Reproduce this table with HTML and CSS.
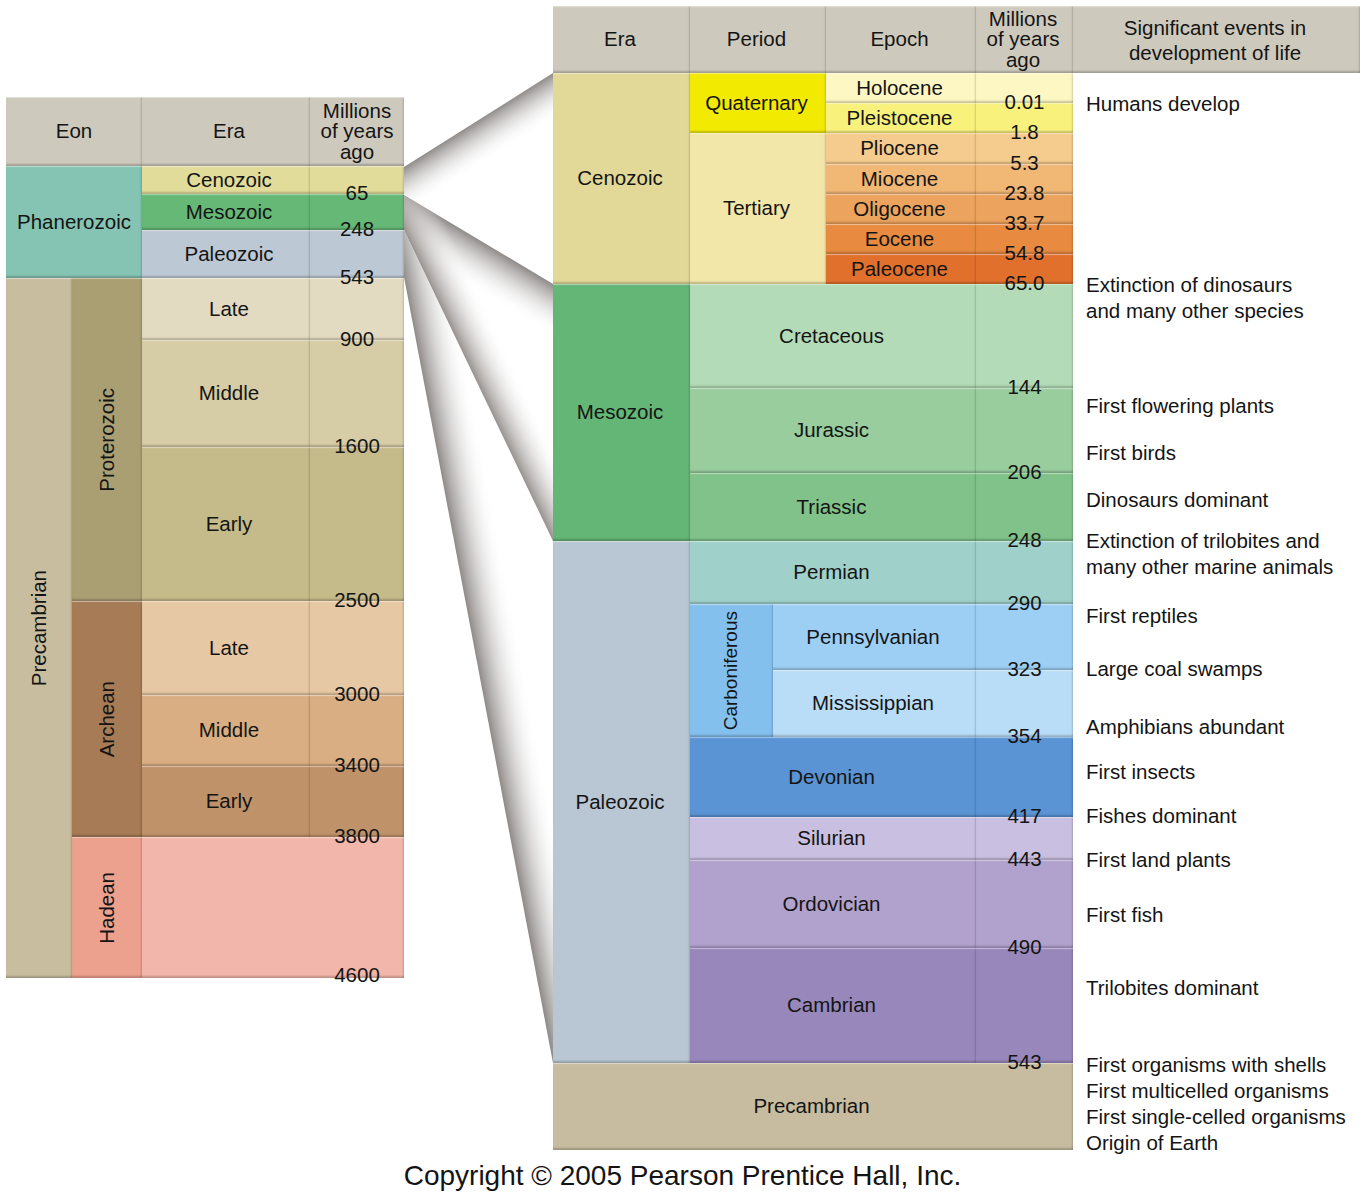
FILE: index.html
```html
<!DOCTYPE html>
<html>
<head>
<meta charset="utf-8">
<title>Geologic time scale</title>
<link rel="stylesheet" href="styles.css">
</head>
<body>
<div class="page">
  <div class="main">
    <div class="ltable">
      <div class="cell hdr span2">Eon</div>
      <div class="cell hdr ecol">Era</div>
      <div class="cell hdr small">Millions<br>of years<br>ago</div>

      <div class="cell phan span2 rows3">Phanerozoic</div>
      <div class="cell ecol l-ceno">Cenozoic</div>
      <div class="cell num l-ceno"><span class="lbl">65</span></div>
      <div class="cell ecol l-meso">Mesozoic</div>
      <div class="cell num l-meso"><span class="lbl">248</span></div>
      <div class="cell ecol l-paleo">Paleozoic</div>
      <div class="cell num l-paleo"><span class="lbl">543</span></div>

      <div class="cell precam rows7"><span class="vert">Precambrian</span></div>
      <div class="cell proter rows3"><span class="vert">Proterozoic</span></div>
      <div class="cell ecol p-late">Late</div>
      <div class="cell num p-late"><span class="lbl">900</span></div>
      <div class="cell ecol p-mid">Middle</div>
      <div class="cell num p-mid"><span class="lbl">1600</span></div>
      <div class="cell ecol p-early">Early</div>
      <div class="cell num p-early"><span class="lbl">2500</span></div>

      <div class="cell arch rows3"><span class="vert">Archean</span></div>
      <div class="cell ecol a-late">Late</div>
      <div class="cell num a-late"><span class="lbl">3000</span></div>
      <div class="cell ecol a-mid">Middle</div>
      <div class="cell num a-mid"><span class="lbl">3400</span></div>
      <div class="cell ecol a-early">Early</div>
      <div class="cell num a-early"><span class="lbl">3800</span></div>

      <div class="cell hadean"><span class="vert">Hadean</span></div>
      <div class="cell num hadfill span2"><span class="lbl lbl-right">4600</span></div>
    </div>

    <svg class="connect" width="149" height="1150" viewBox="404 6 149 1150">
      <defs>
        <linearGradient id="g1" gradientUnits="userSpaceOnUse" x1="404" y1="167" x2="425.4" y2="200.8">
          <stop offset="0" stop-color="#8f8b89"/>
          <stop offset="1" stop-color="#ffffff" stop-opacity="0"/>
        </linearGradient>
        <linearGradient id="g2" gradientUnits="userSpaceOnUse" x1="404" y1="195" x2="380.9" y2="233.6">
          <stop offset="0" stop-color="#8f8b89"/>
          <stop offset="1" stop-color="#ffffff" stop-opacity="0"/>
        </linearGradient>
        <linearGradient id="g3" gradientUnits="userSpaceOnUse" x1="404" y1="230" x2="440.1" y2="212.7">
          <stop offset="0" stop-color="#97928f"/>
          <stop offset="1" stop-color="#ffffff" stop-opacity="0"/>
        </linearGradient>
        <linearGradient id="g4" gradientUnits="userSpaceOnUse" x1="404" y1="277" x2="448.2" y2="268.6">
          <stop offset="0" stop-color="#8f8b89"/>
          <stop offset="1" stop-color="#ffffff" stop-opacity="0"/>
        </linearGradient>
      </defs>
      <polygon points="404,167 553,73 553,284 404,194" fill="url(#g1)"/>
      <polygon points="404,195 553,284 553,541 404,230" fill="url(#g2)"/>
      <polygon points="404,195 553,284 553,541 404,230" fill="url(#g3)"/>
      <polygon points="404,230 553,541 553,1063 404,277" fill="url(#g4)"/>
    </svg>

    <div class="rtable">
      <div class="cell hdr">Era</div>
      <div class="cell hdr span2">Period</div>
      <div class="cell hdr">Epoch</div>
      <div class="cell hdr small">Millions<br>of years<br>ago</div>
      <div class="cell hdr events-h">Significant events in<br>development of life</div>

      <div class="events">
        <p class="ev" style="top:18px">Humans develop</p>
        <p class="ev" style="top:199px">Extinction of dinosaurs<br>and many other species</p>
        <p class="ev" style="top:320px">First flowering plants</p>
        <p class="ev" style="top:367px">First birds</p>
        <p class="ev" style="top:414px">Dinosaurs dominant</p>
        <p class="ev" style="top:455px">Extinction of trilobites and<br>many other marine animals</p>
        <p class="ev" style="top:530px">First reptiles</p>
        <p class="ev" style="top:583px">Large coal swamps</p>
        <p class="ev" style="top:641px">Amphibians abundant</p>
        <p class="ev" style="top:686px">First insects</p>
        <p class="ev" style="top:730px">Fishes dominant</p>
        <p class="ev" style="top:774px">First land plants</p>
        <p class="ev" style="top:829px">First fish</p>
        <p class="ev" style="top:902px">Trilobites dominant</p>
        <p class="ev" style="top:979px">First organisms with shells<br>First multicelled organisms<br>First single-celled organisms<br>Origin of Earth</p>
      </div>

      <div class="cell r-ceno rows7">Cenozoic</div>
      <div class="cell quat span2 rows2">Quaternary</div>
      <div class="cell holo">Holocene</div>
      <div class="cell num holo"><span class="lbl">0.01</span></div>
      <div class="cell pleis">Pleistocene</div>
      <div class="cell num pleis"><span class="lbl">1.8</span></div>
      <div class="cell tert span2 rows5">Tertiary</div>
      <div class="cell plio">Pliocene</div>
      <div class="cell num plio"><span class="lbl">5.3</span></div>
      <div class="cell mio">Miocene</div>
      <div class="cell num mio"><span class="lbl">23.8</span></div>
      <div class="cell oligo">Oligocene</div>
      <div class="cell num oligo"><span class="lbl">33.7</span></div>
      <div class="cell eoc">Eocene</div>
      <div class="cell num eoc"><span class="lbl">54.8</span></div>
      <div class="cell paleoc">Paleocene</div>
      <div class="cell num paleoc"><span class="lbl">65.0</span></div>

      <div class="cell r-meso rows3">Mesozoic</div>
      <div class="cell creta span3">Cretaceous</div>
      <div class="cell num creta"><span class="lbl">144</span></div>
      <div class="cell jura span3">Jurassic</div>
      <div class="cell num jura"><span class="lbl">206</span></div>
      <div class="cell trias span3">Triassic</div>
      <div class="cell num trias"><span class="lbl">248</span></div>

      <div class="cell r-paleo rows7">Paleozoic</div>
      <div class="cell perm span3">Permian</div>
      <div class="cell num perm"><span class="lbl">290</span></div>
      <div class="cell carb rows2"><span class="vert vsmall">Carboniferous</span></div>
      <div class="cell penn span2">Pennsylvanian</div>
      <div class="cell num penn"><span class="lbl">323</span></div>
      <div class="cell miss span2">Mississippian</div>
      <div class="cell num miss"><span class="lbl">354</span></div>
      <div class="cell devo span3">Devonian</div>
      <div class="cell num devo"><span class="lbl">417</span></div>
      <div class="cell silu span3">Silurian</div>
      <div class="cell num silu"><span class="lbl">443</span></div>
      <div class="cell ordo span3">Ordovician</div>
      <div class="cell num ordo"><span class="lbl">490</span></div>
      <div class="cell camb span3">Cambrian</div>
      <div class="cell num camb"><span class="lbl">543</span></div>

      <div class="cell r-precam span5">Precambrian</div>
    </div>
  </div>
  <p class="copy">Copyright © 2005 Pearson Prentice Hall, Inc.</p>
</div>
</body>
</html>
```

FILE: styles.css
```css
* { box-sizing: border-box; }
html, body { margin: 0; padding: 0; background: #ffffff; }
body {
  font-family: "Liberation Sans", Arial, Helvetica, sans-serif;
  color: #141414;
  font-size: 20.5px;
}
.page { width: 1365px; padding: 6px 0 0 6px; }
.main { display: flex; align-items: flex-start; }

.ltable {
  margin-top: 91px;
  display: grid;
  grid-template-columns: 66px 70px 168px 94px;
  grid-template-rows: 69px 28px 36px 48px 62px 107px 154px 94px 71px 71px 141px;
}
.rtable {
  display: grid;
  grid-template-columns: 137px 83px 53px 150px 97px 287px;
  grid-template-rows: 67px 30px 30px 31px 30px 30px 30px 30px 104px 85px 68px 63px 66px 67px 80px 43px 88px 115px 87px;
}
.connect { display: block; flex: none; }

.cell {
  display: flex;
  align-items: center;
  justify-content: center;
  text-align: center;
  line-height: 1.2;
  box-shadow:
    inset 0 2px 1px -1px rgba(255,255,255,0.45),
    inset 0 -3px 2px -1px rgba(0,0,0,0.20),
    inset -2px 0 2px -1px rgba(0,0,0,0.16);
}
.rtable .cell { padding-right: 3px; }
.ecol { padding-left: 6px; }
.hdr { background: #cdc9bd; }
.small { line-height: 20.5px; }
.events-h { line-height: 25px; }

.span2 { grid-column: span 2; }
.span3 { grid-column: span 3; }
.span5 { grid-column: span 5; }
.rows2 { grid-row: span 2; }
.rows3 { grid-row: span 3; }
.rows5 { grid-row: span 5; }
.rows7 { grid-row: span 7; }

.num { position: relative; }
.rtable .num { padding-right: 0; }
.lbl {
  position: absolute;
  left: 0;
  right: 0;
  bottom: 1px;
  transform: translateY(50%);
  line-height: 22px;
  text-align: center;
  z-index: 2;
}
.lbl-right { left: auto; width: 94px; bottom: 3px; }

.vert {
  writing-mode: vertical-rl;
  transform: rotate(180deg);
  line-height: 1;
}
.vsmall { font-size: 19px; }

/* left table colours */
.phan { background: #85c4b2; }
.l-ceno { background: #e2dc9b; }
.l-meso { background: #66b877; }
.l-paleo { background: #bcc8d3; }
.precam { background: #c8bd9f; }
.proter { background: #aa9f73; }
.p-late { background: #e3dbc1; }
.p-mid { background: #d6cca5; }
.p-early { background: #c5ba8a; }
.arch { background: #a67b56; }
.a-late { background: #e6c8a4; }
.a-mid { background: #d9ae83; }
.a-early { background: #bf926a; }
.hadean { background: #eca08e; }
.hadfill { background: #f2b6aa; }

/* right table colours */
.r-ceno { background: #e2d999; }
.quat { background: #f2ea00; }
.tert { background: #f3e6a9; }
.holo { background: #fdf7c3; }
.pleis { background: #f8f27d; }
.plio { background: #f6cb8e; }
.mio { background: #f1b775; }
.oligo { background: #eca35d; }
.eoc { background: #e88b41; }
.paleoc { background: #e1702d; }
.r-meso { background: #64b676; }
.creta { background: #b4dbb7; }
.jura { background: #99cd9e; }
.trias { background: #80c289; }
.r-paleo { background: #b9c6d3; }
.perm { background: #9fd1ca; }
.carb { background: #84c0ed; }
.penn { background: #9dcff4; }
.miss { background: #b9ddf7; }
.devo { background: #5a94d4; }
.silu { background: #c9bfe0; }
.ordo { background: #b1a1cd; }
.camb { background: #9887bb; }
.r-precam { background: #c7bca0; }

.events {
  grid-column: 6;
  grid-row: 2 / 20;
  position: relative;
}
.ev {
  position: absolute;
  left: 13px;
  margin: 0;
  line-height: 26px;
  white-space: nowrap;
}

.copy {
  margin: 4px 0 0 -6px;
  width: 1365px;
  text-align: center;
  font-size: 28px;
  line-height: 32px;
}
```
